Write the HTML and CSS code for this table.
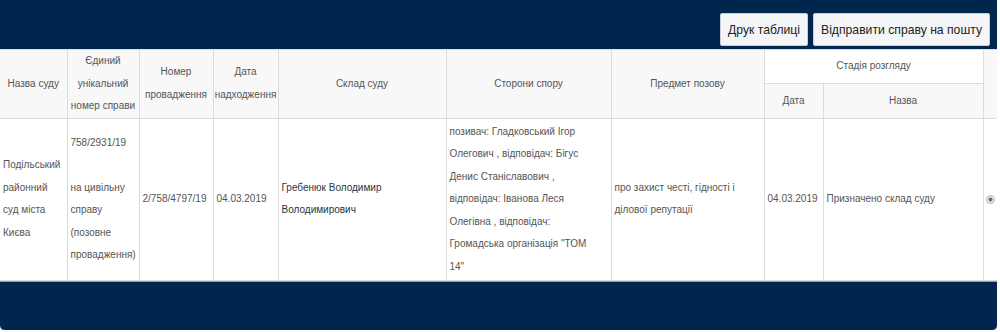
FILE: index.html
```html
<!DOCTYPE html>
<html lang="uk">
<head>
<meta charset="utf-8">
<title>Справа</title>
<link rel="stylesheet" href="styles.css">
</head>
<body>
<div class="panel">
  <div class="toolbar">
    <button class="btn">Друк таблиці</button>
    <button class="btn">Відправити справу на пошту</button>
  </div>
  <table class="cases">
    <colgroup>
      <col class="c1"><col class="c2"><col class="c3"><col class="c4"><col class="c5">
      <col class="c6"><col class="c7"><col class="c8"><col class="c9"><col class="c10">
    </colgroup>
    <thead>
      <tr>
        <th rowspan="2">Назва суду</th>
        <th rowspan="2">Єдиний унікальний номер справи</th>
        <th rowspan="2">Номер провадження</th>
        <th rowspan="2">Дата надходження</th>
        <th rowspan="2">Склад суду</th>
        <th rowspan="2">Сторони спору</th>
        <th rowspan="2">Предмет позову</th>
        <th colspan="2" class="stage">Стадія розгляду</th>
        <th rowspan="2"></th>
      </tr>
      <tr>
        <th class="sub">Дата</th>
        <th class="sub">Назва</th>
      </tr>
    </thead>
    <tbody>
      <tr>
        <td>Подільський районний суд міста Києва</td>
        <td>758/2931/19<br><br>на цивільну справу (позовне провадження)</td>
        <td>2/758/4797/19</td>
        <td>04.03.2019</td>
        <td class="judge">Гребенюк Володимир Володимирович</td>
        <td class="parties">позивач: Гладковський Ігор Олегович , відповідач: Бігус Денис Станіславович , відповідач: Іванова Леся Олегівна , відповідач: Громадська організація "ТОМ 14"</td>
        <td>про захист честі, гідності і ділової репутації</td>
        <td>04.03.2019</td>
        <td>Призначено склад суду</td>
        <td class="pick"><span class="radio"></span></td>
      </tr>
    </tbody>
  </table>
  <div class="footer"></div>
</div>
</body>
</html>
```

FILE: styles.css
```css
html, body {
  margin: 0;
  padding: 0;
  background: #ffffff;
}

body {
  font-family: "Liberation Sans", Arial, sans-serif;
  color: #555;
}

.panel {
  width: 997px;
  background: #01264e;
  border-radius: 0 0 5px 5px;
  overflow: hidden;
  box-shadow: 0 1px 0 #8fa0b3;
}

.toolbar {
  height: 49px;
  display: flex;
  justify-content: flex-end;
  align-items: flex-start;
  gap: 5px;
  padding: 13px 7px 0 0;
  box-sizing: border-box;
}

.btn {
  height: 33px;
  padding: 0 7px;
  font-family: "Liberation Sans", Arial, sans-serif;
  font-size: 12.2px;
  color: #222;
  background: #f4f5f6;
  border: 1px solid #c9ced4;
  border-radius: 2px;
}

.cases {
  width: 997px;
  table-layout: fixed;
  border-collapse: collapse;
  background: #fff;
  border-top: 1px solid #c5ccd4;
}

.c1 { width: 67px; }
.c2 { width: 72px; }
.c3 { width: 74px; }
.c4 { width: 65px; }
.c5 { width: 168px; }
.c6 { width: 165px; }
.c7 { width: 153px; }
.c8 { width: 59px; }
.c9 { width: 160px; }
.c10 { width: 14px; }

.cases th,
.cases td {
  border: 1px solid #dcdcdc;
  line-height: 22.5px;
  vertical-align: middle;
  word-wrap: break-word;
}

.cases th {
  font-size: 10px;
  font-weight: normal;
  text-align: center;
  background: #f8f8f8;
  color: #555;
  height: 32px;
  padding: 0;
}

.cases th.stage {
  background: #fff;
}

.cases tr > :first-child { border-left: none; }

.cases td {
  font-size: 10px;
  text-align: left;
  padding: 2px 2px 2px 3px;
  height: 157px;
  color: #555;
}

.cases td.parties {
  padding-right: 14px;
}

.cases td.judge {
  color: #2a3441;
}

.cases td.pick {
  padding: 0;
  text-align: center;
}

.radio {
  display: inline-block;
  width: 7px;
  height: 7px;
  border-radius: 50%;
  border: 1px solid #b8b8b8;
  background: radial-gradient(circle, #6d6d6d 0 1.8px, #e8e8e8 2.3px);
  vertical-align: middle;
}

.footer {
  height: 48px;
  border-top: 1px solid #8fa0b3;
}
```
